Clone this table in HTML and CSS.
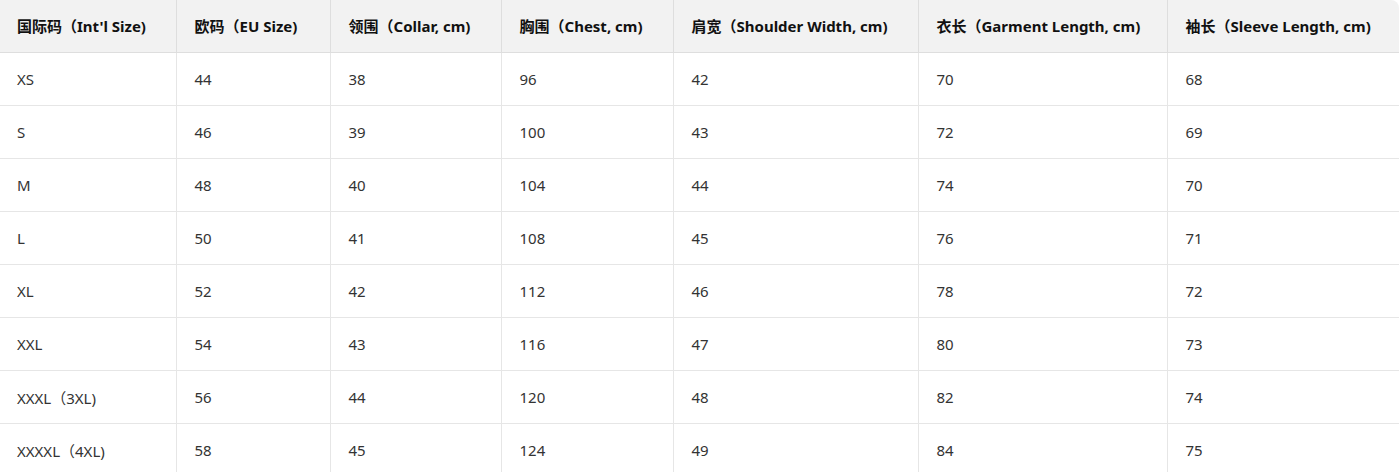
FILE: index.html
```html
<!DOCTYPE html>
<html lang="zh">
<head>
<meta charset="utf-8">
<link rel="stylesheet" href="styles.css">
</head>
<body>
<div class="wrap">
<table class="size-table">
<colgroup>
<col class="c1"><col class="c2"><col class="c3"><col class="c4"><col class="c5"><col class="c6"><col class="c7">
</colgroup>
<thead>
<tr>
<th>国际码（Int'l Size)</th>
<th>欧码（EU Size)</th>
<th>领围（Collar, cm)</th>
<th>胸围（Chest, cm)</th>
<th>肩宽（Shoulder Width, cm)</th>
<th>衣长（Garment Length, cm)</th>
<th>袖长（Sleeve Length, cm)</th>
</tr>
</thead>
<tbody>
<tr><td>XS</td><td>44</td><td>38</td><td>96</td><td>42</td><td>70</td><td>68</td></tr>
<tr><td>S</td><td>46</td><td>39</td><td>100</td><td>43</td><td>72</td><td>69</td></tr>
<tr><td>M</td><td>48</td><td>40</td><td>104</td><td>44</td><td>74</td><td>70</td></tr>
<tr><td>L</td><td>50</td><td>41</td><td>108</td><td>45</td><td>76</td><td>71</td></tr>
<tr><td>XL</td><td>52</td><td>42</td><td>112</td><td>46</td><td>78</td><td>72</td></tr>
<tr><td>XXL</td><td>54</td><td>43</td><td>116</td><td>47</td><td>80</td><td>73</td></tr>
<tr><td>XXXL（3XL)</td><td>56</td><td>44</td><td>120</td><td>48</td><td>82</td><td>74</td></tr>
<tr><td>XXXXL（4XL)</td><td>58</td><td>45</td><td>124</td><td>49</td><td>84</td><td>75</td></tr>
</tbody>
</table>
</div>
</body>
</html>
```

FILE: styles.css
```css
html, body {
  margin: 0;
  padding: 0;
  background: #ffffff;
}
.wrap {
  width: 1399px;
  border-radius: 0 8px 0 0;
  overflow: hidden;
}
.size-table {
  width: 1399px;
  table-layout: fixed;
  border-collapse: collapse;
  font-family: "Noto Sans", "Noto Sans CJK SC", sans-serif;
  font-size: 15px;
  color: #333333;
}
.c1 { width: 176px; }
.c2 { width: 154px; }
.c3 { width: 171px; }
.c4 { width: 172px; }
.c5 { width: 245px; }
.c6 { width: 249px; }
.c7 { width: 232px; }
.size-table th,
.size-table td {
  height: 52px;
  padding: 0 16px 0 18px;
  text-align: left;
  vertical-align: middle;
  border-bottom: 1px solid #e6e6e6;
  border-left: 1px solid #e6e6e6;
  white-space: nowrap;
}
.size-table th:first-child,
.size-table td:first-child {
  border-left: none;
  padding-left: 17px;
}
.size-table th {
  height: 50px;
  background: #f2f2f2;
  color: #111111;
  font-weight: 700;
  padding-bottom: 2px;
  border-bottom: 1px solid #dedede;
  border-left-color: #dedede;
}
```
